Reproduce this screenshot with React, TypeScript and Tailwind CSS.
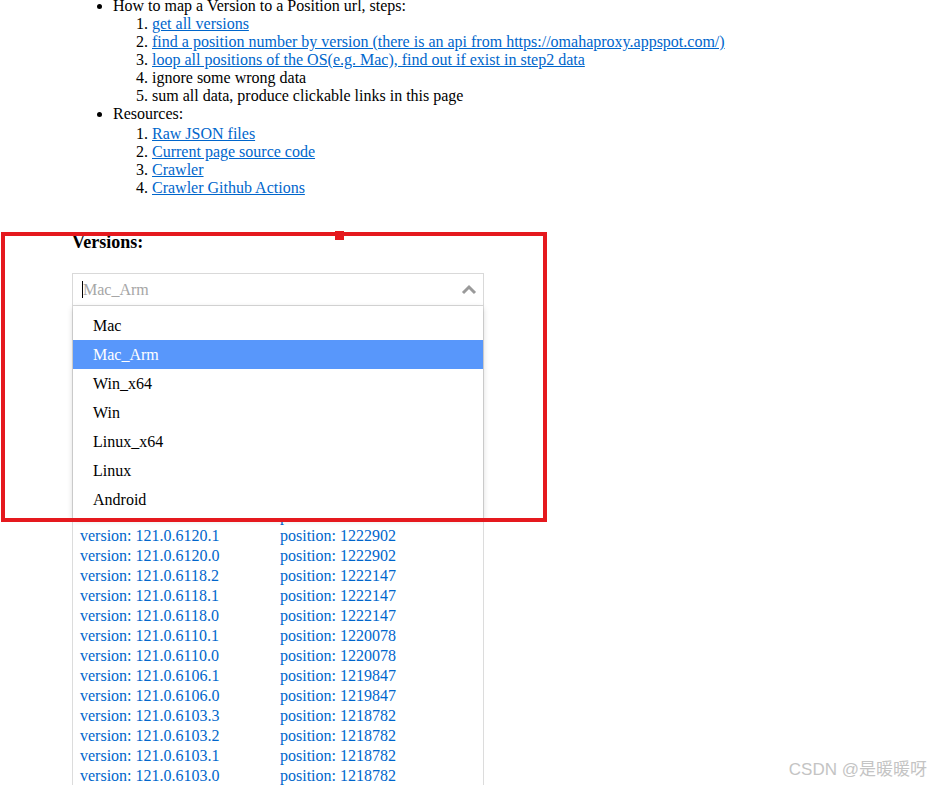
import React from "react";

const hidden: [string, string][] = [
  ["122.0.6261.1", "1250580"],
  ["122.0.6261.0", "1250580"],
  ["122.0.6259.0", "1249870"],
  ["122.0.6257.0", "1248890"],
  ["122.0.6255.0", "1247731"],
  ["122.0.6253.0", "1246945"],
  ["121.0.6167.0", "1233107"],
  ["121.0.6156.0", "1229868"],
  ["121.0.6150.0", "1227982"],
  ["121.0.6131.0", "1224698"],
  ["121.0.6122.0", "1223471"],
];

const visible: [string, string][] = [
  ["121.0.6120.1", "1222902"],
  ["121.0.6120.0", "1222902"],
  ["121.0.6118.2", "1222147"],
  ["121.0.6118.1", "1222147"],
  ["121.0.6118.0", "1222147"],
  ["121.0.6110.1", "1220078"],
  ["121.0.6110.0", "1220078"],
  ["121.0.6106.1", "1219847"],
  ["121.0.6106.0", "1219847"],
  ["121.0.6103.3", "1218782"],
  ["121.0.6103.2", "1218782"],
  ["121.0.6103.1", "1218782"],
  ["121.0.6103.0", "1218782"],
  ["121.0.6099.0", "1217362"],
];

const options = ["Mac", "Mac_Arm", "Win_x64", "Win", "Linux_x64", "Linux", "Android"];

export default function App() {
  const rows = [...hidden, ...visible];
  return (
    <div className="relative h-[785px] w-[931px] overflow-hidden bg-white text-[16px] text-black font-['Liberation_Serif',serif]">
      <div className="mt-[-3px] leading-[18px]">
        <ul className="list-disc pl-[113px]">
          <li>
            How to map a Version to a Position url, steps:
            <ol className="list-decimal pl-[39px]">
              <li>
                <a className="text-[#0066cc] underline" href="#">get all versions</a>
              </li>
              <li>
                <a className="text-[#0066cc] underline" href="#">
                  find a position number by version (there is an api from https://omahaproxy.appspot.com/)
                </a>
              </li>
              <li>
                <a className="text-[#0066cc] underline" href="#">
                  loop all positions of the OS(e.g. Mac), find out if exist in step2 data
                </a>
              </li>
              <li>ignore some wrong data</li>
              <li>sum all data, produce clickable links in this page</li>
            </ol>
          </li>
          <li>
            Resources:
            <ol className="mt-[2px] list-decimal pl-[39px]">
              <li>
                <a className="text-[#0066cc] underline" href="#">Raw JSON files</a>
              </li>
              <li>
                <a className="text-[#0066cc] underline" href="#">Current page source code</a>
              </li>
              <li>
                <a className="text-[#0066cc] underline" href="#">Crawler</a>
              </li>
              <li>
                <a className="text-[#0066cc] underline" href="#">Crawler Github Actions</a>
              </li>
            </ol>
          </li>
        </ul>
      </div>

      <div className="ml-[72px] mt-[35px]">
        <h3 className="text-[18px] font-bold leading-[21px]">Versions:</h3>

        <div className="relative mt-[20px] w-[412px]">
          <div className="flex h-[33px] items-center border border-[#d9d9d9] bg-white pl-[9px] pr-[6px]">
            <span className="h-[17px] w-px bg-black" />
            <span className="text-[#a6a6a6]">Mac_Arm</span>
            <svg className="ml-auto" width="16" height="12" viewBox="0 0 16 12">
              <polyline points="2,9 8,3 14,9" fill="none" stroke="#9a9a9a" strokeWidth="3" />
            </svg>
          </div>

          <div className="w-[412px] border-x border-[#dcdcdc] leading-[20px]">
            {rows.map(([v, p], i) => (
              <div
                key={i}
                className={
                  i < hidden.length - 1
                    ? "invisible flex h-[20px] pl-[7px] text-[#0066cc]"
                    : "flex h-[20px] pl-[7px] text-[#0066cc]"
                }
              >
                <span className="w-[200px]">version: {v}</span>
                <span>position: {p}</span>
              </div>
            ))}
          </div>

          <div className="absolute left-[1px] right-[1px] top-[33px] bg-white pb-[4px] pt-[5px] shadow-[0_2px_6px_rgba(0,0,0,0.18)]">
            {options.map((o) => (
              <div
                key={o}
                className={
                  o === "Mac_Arm"
                    ? "flex h-[29px] items-center bg-[#5897fb] pl-[20px] text-white"
                    : "flex h-[29px] items-center pl-[20px] text-black"
                }
              >
                {o}
              </div>
            ))}
          </div>
        </div>
      </div>

      <div className="pointer-events-none absolute left-[1px] top-[232px] h-[290px] w-[546px] border-[4px] border-[#e5191e]" />
      <div className="pointer-events-none absolute left-[335px] top-[231px] h-[9px] w-[9px] bg-[#e5191e]" />

      <div className="absolute bottom-[5px] right-[4px] text-[17px] leading-[20px] text-[#c4c4c4] font-['Liberation_Sans','Noto_Sans_CJK_SC',sans-serif]">
        CSDN @是暖暖呀
      </div>
    </div>
  );
}
